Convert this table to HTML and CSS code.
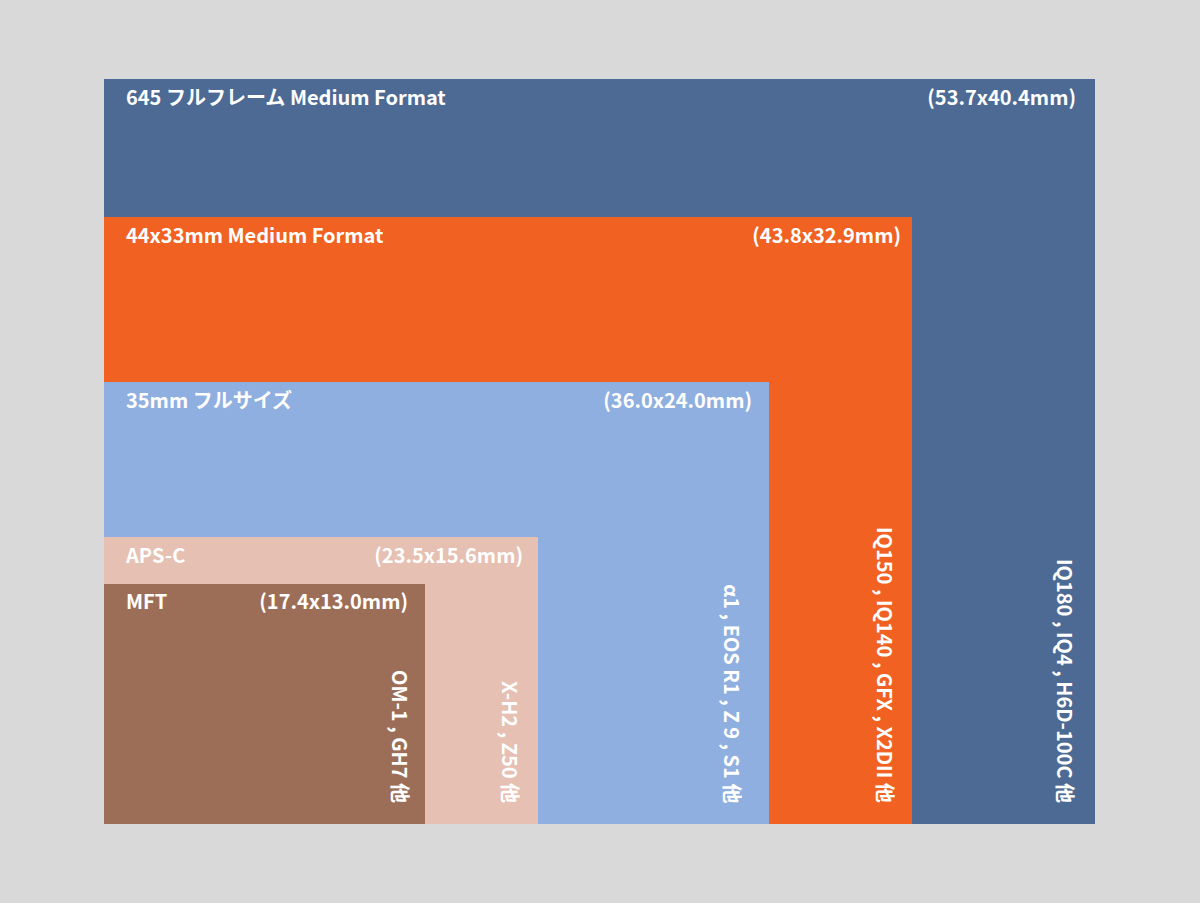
FILE: index.html
```html
<!DOCTYPE html>
<html lang="ja">
<head>
<meta charset="utf-8">
<title>Sensor sizes</title>
<link rel="stylesheet" href="styles.css">
</head>
<body>
<div class="page">
  <div class="box b645">
    <div class="head"><span class="name">645 フルフレーム Medium Format</span><span class="size">(53.7x40.4mm)</span></div>
    <div class="body">
      <div class="box b4433">
        <div class="head"><span class="name">44x33mm Medium Format</span><span class="size">(43.8x32.9mm)</span></div>
        <div class="body">
          <div class="box b35">
            <div class="head"><span class="name">35mm フルサイズ</span><span class="size">(36.0x24.0mm)</span></div>
            <div class="body">
              <div class="box baps">
                <div class="head"><span class="name">APS-C</span><span class="size">(23.5x15.6mm)</span></div>
                <div class="body">
                  <div class="box bmft">
                    <div class="head"><span class="name">MFT</span><span class="size">(17.4x13.0mm)</span></div>
                    <div class="body">
                      <div class="side"><span class="vt">OM-1 , GH7 他</span></div>
                    </div>
                  </div>
                  <div class="side"><span class="vt">X-H2 , Z50 他</span></div>
                </div>
              </div>
              <div class="side"><span class="vt">α1 , EOS R1 , Z 9 , S1 他</span></div>
            </div>
          </div>
          <div class="side"><span class="vt">IQ150 , IQ140 , GFX , X2DII 他</span></div>
        </div>
      </div>
      <div class="side"><span class="vt">IQ180 , IQ4 , H6D-100C 他</span></div>
    </div>
  </div>
</div>
</body>
</html>
```

FILE: styles.css
```css
html, body {
  margin: 0;
  padding: 0;
  background: #d9d9d9;
}
.page {
  padding: 79px 104px;
  font-family: "Noto Sans CJK JP", "Noto Sans", sans-serif;
  font-weight: 700;
  font-size: 20px;
  color: #ffffff;
}
.box {
  display: flex;
  flex-direction: column;
  box-sizing: border-box;
  flex: none;
}
.head {
  display: flex;
  justify-content: space-between;
  align-items: flex-start;
  line-height: 26px;
  padding: 5px 19px 0 22px;
  height: 32px;
  box-sizing: border-box;
}
.body {
  flex: 1;
  display: flex;
  align-items: flex-end;
  min-height: 0;
}
.side {
  flex: 1;
  display: flex;
  justify-content: flex-end;
  align-items: flex-end;
  padding-bottom: 21px;
  align-self: stretch;
}
.vt {
  writing-mode: vertical-rl;
  text-orientation: sideways;
  line-height: 20px;
  white-space: nowrap;
}
.b645 { width: 991px; height: 745px; background: #4c6a94; }
.b4433 { width: 808px; height: 607px; background: #f16222; }
.b35 { width: 665px; height: 442px; background: #8fafe0; }
.baps { width: 434px; height: 287px; background: #e6c0b2; }
.bmft { width: 321px; height: 240px; background: #9d6e57; }

.b645 > .head { padding-right: 19px; }
.b4433 > .head { padding-right: 11px; }
.b35 > .head { padding-right: 17px; }
.baps > .head { padding-right: 15px; }
.bmft > .head { padding-right: 17px; padding-top: 4px; }
.b4433 > .head, .b35 > .head, .baps > .head, .bmft > .head { height: 30px; }

.b645 > .body > .side .vt { margin-right: 20px; }
.b4433 > .body > .side .vt { margin-right: 17px; }
.b35 > .body > .side .vt { margin-right: 27px; }
.baps > .body > .side .vt { margin-right: 18px; }
.bmft > .body > .side .vt { margin-right: 15px; }
```
